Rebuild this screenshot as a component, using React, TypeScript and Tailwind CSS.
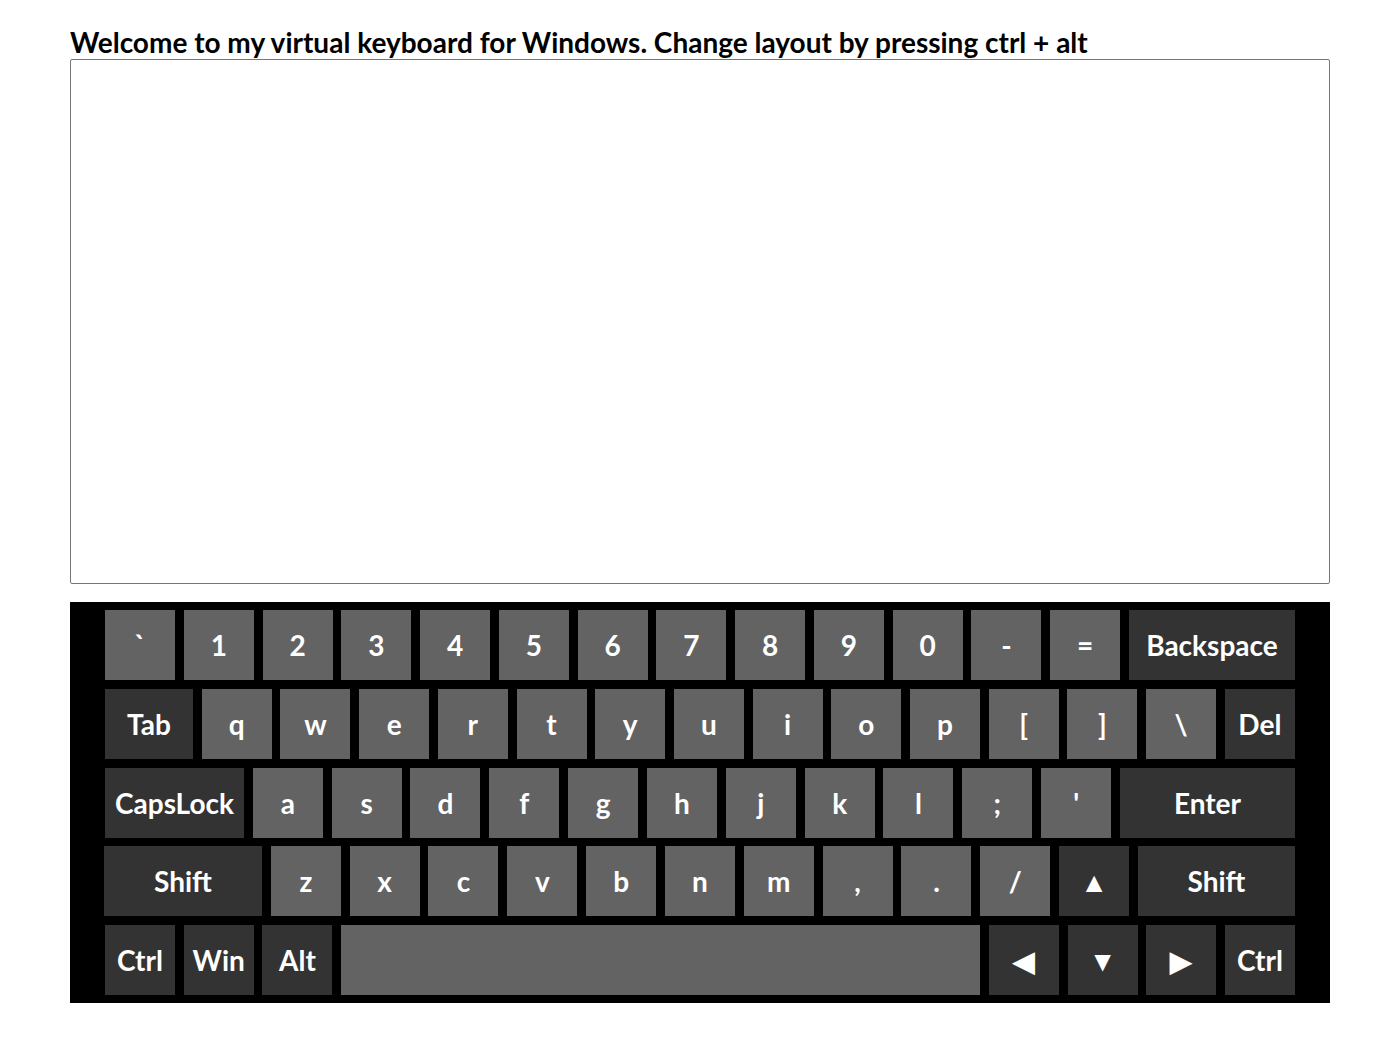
type Key = { label: string; w?: number; dark?: boolean };

const rows: Key[][] = [
  [
    { label: '`' }, { label: '1' }, { label: '2' }, { label: '3' }, { label: '4' },
    { label: '5' }, { label: '6' }, { label: '7' }, { label: '8' }, { label: '9' },
    { label: '0' }, { label: '-' }, { label: '=' },
    { label: 'Backspace', w: 166, dark: true },
  ],
  [
    { label: 'Tab', w: 88, dark: true },
    { label: 'q' }, { label: 'w' }, { label: 'e' }, { label: 'r' }, { label: 't' },
    { label: 'y' }, { label: 'u' }, { label: 'i' }, { label: 'o' }, { label: 'p' },
    { label: '[' }, { label: ']' }, { label: '\\' },
    { label: 'Del', dark: true },
  ],
  [
    { label: 'CapsLock', w: 139, dark: true },
    { label: 'a' }, { label: 's' }, { label: 'd' }, { label: 'f' }, { label: 'g' },
    { label: 'h' }, { label: 'j' }, { label: 'k' }, { label: 'l' }, { label: ';' },
    { label: "'" },
    { label: 'Enter', w: 175, dark: true },
  ],
  [
    { label: 'Shift', w: 158, dark: true },
    { label: 'z' }, { label: 'x' }, { label: 'c' }, { label: 'v' }, { label: 'b' },
    { label: 'n' }, { label: 'm' }, { label: ',' }, { label: '.' }, { label: '/' },
    { label: '▲', dark: true },
    { label: 'Shift', w: 157, dark: true },
  ],
  [
    { label: 'Ctrl', dark: true }, { label: 'Win', dark: true }, { label: 'Alt', dark: true },
    { label: '', w: 639 },
    { label: '◀', dark: true }, { label: '▼', dark: true }, { label: '▶', dark: true },
    { label: 'Ctrl', dark: true },
  ],
];

function KeyCap({ k }: { k: Key }) {
  return (
    <div
      className={`h-[70px] shrink-0 flex items-center justify-center text-white font-bold text-[28px] ${
        k.dark ? 'bg-[#333333]' : 'bg-[#636363]'
      }`}
      style={{ width: k.w ?? 70 }}
    >
      {k.label}
    </div>
  );
}

export default function App() {
  return (
    <div className="min-h-screen bg-white pl-[70px] pt-[25px]" style={{ fontFamily: 'Lato, "Noto Sans", sans-serif' }}>
      <div className="text-[28px] font-bold leading-[34px] text-black">
        Welcome to my virtual keyboard for Windows. Change layout by pressing ctrl + alt
      </div>
      <textarea className="block w-[1260px] h-[525px] border border-[#767676] rounded-[2px] resize-none outline-none" />
      <div className="mt-[18px] w-[1260px] h-[401px] bg-black pl-[35px] pr-[35px] py-[8px] flex flex-col justify-between">
        {rows.map((row, i) => (
          <div key={i} className={`flex justify-between ${i === 3 ? '-ml-px' : ''}`}>
            {row.map((k, j) => (
              <KeyCap key={j} k={k} />
            ))}
          </div>
        ))}
      </div>
    </div>
  );
}
